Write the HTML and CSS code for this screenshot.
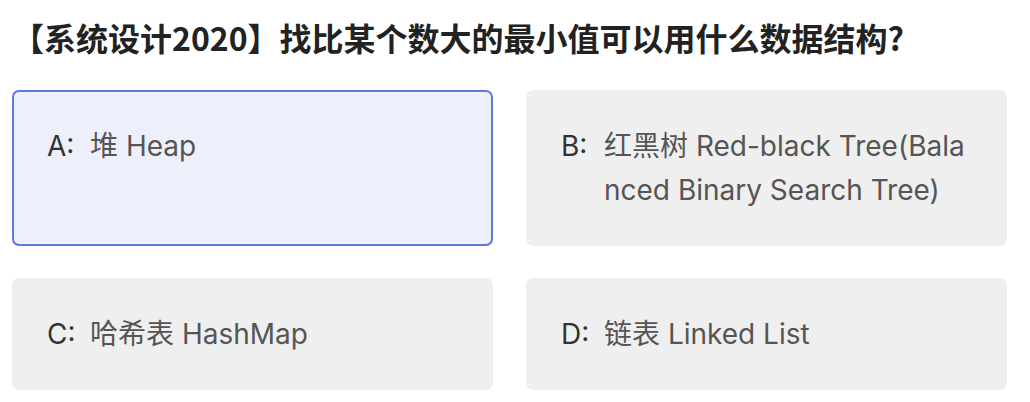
FILE: index.html
```html
<!DOCTYPE html>
<html lang="zh-CN">
<head>
<meta charset="utf-8">
<title>Question</title>
<link rel="stylesheet" href="styles.css">
</head>
<body>
<div class="page">
  <h1 class="question">【系统设计2020】找比某个数大的最小值可以用什么数据结构?</h1>
  <div class="options">
    <div class="option selected"><span class="label">A:</span><span class="text">堆 Heap</span></div>
    <div class="option"><span class="label">B:</span><span class="text">红黑树 Red-black Tree(Balanced Binary Search Tree)</span></div>
    <div class="option"><span class="label">C:</span><span class="text">哈希表 HashMap</span></div>
    <div class="option"><span class="label">D:</span><span class="text">链表 Linked List</span></div>
  </div>
</div>
</body>
</html>
```
FILE: styles.css
```css
* { box-sizing: border-box; }
html, body { margin: 0; padding: 0; background: #ffffff; }
body {
  font-family: Inter, "Noto Sans CJK SC", sans-serif;
}
.page {
  padding: 15px 24px 0 12px;
}
.question {
  margin: 0 0 31px 0;
  font-size: 32px;
  line-height: 44px;
  font-weight: 700;
  color: #222222;
  font-family: "Noto Sans CJK SC", sans-serif;
  white-space: nowrap;
}
.options {
  display: grid;
  grid-template-columns: 481px 481px;
  column-gap: 33px;
  row-gap: 32px;
}
.option {
  display: flex;
  align-items: flex-start;
  padding: 32px 38px 32px 33px;
  border: 2px solid transparent;
  border-radius: 7px;
  background: #efefef;
  font-size: 28px;
  line-height: 44px;
  color: #555555;
}
.option.selected {
  background: #edeffa;
  border-color: #5a7bdc;
}
.label {
  flex: none;
  width: 43px;
  color: #333333;
}
.text {
  flex: 1;
  min-width: 0;
  word-break: break-all;
}
```
